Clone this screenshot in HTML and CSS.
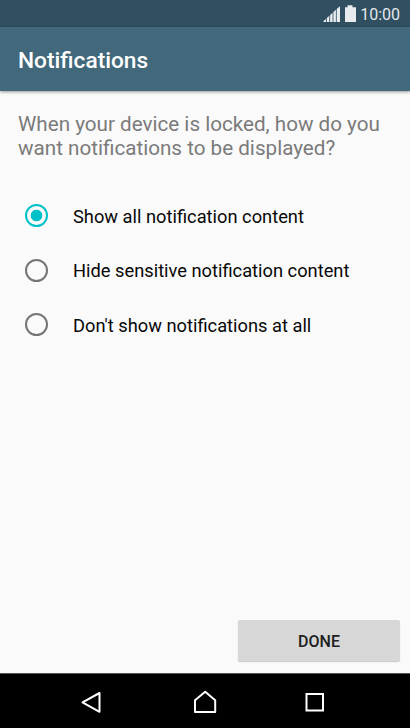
FILE: index.html
```html
<!DOCTYPE html>
<html lang="en">
<head>
<meta charset="utf-8">
<meta name="viewport" content="width=device-width, initial-scale=1">
<title>Notifications</title>
<link rel="stylesheet" href="styles.css">
</head>
<body>
<div class="screen">
  <div class="status-bar">
    <svg class="status-icons" width="34" height="18" viewBox="0 0 34 18" fill="#e8ecef">
      <path d="M.5 17v-1L3 14v3zM3.800 17v-4L6.300 10.800V17zM7.100 17v-7l2.500-2.200V17zM10.400 17V7l2.500-2.200V17zM13.700 17V4L17 1.200V17z"/>
      <path d="M22 2.200h2.500V.2h5v2H33V17H22z"/>
    </svg>
    <span class="clock">10:00</span>
  </div>
  <header class="app-bar"><h1 class="title">Notifications</h1></header>
  <main class="content">
    <p class="question">When your device is locked, how do you<br>want notifications to be displayed?</p>
    <div class="options" role="radiogroup">
      <label class="option"><input class="radio" type="radio" name="lock" checked><span class="label">Show all notification content</span></label>
      <label class="option"><input class="radio" type="radio" name="lock"><span class="label">Hide sensitive notification content</span></label>
      <label class="option"><input class="radio" type="radio" name="lock"><span class="label">Don't show notifications at all</span></label>
    </div>
    <button class="done" type="button">DONE</button>
  </main>
  <nav class="nav-bar">
    <svg width="24" height="24" viewBox="0 0 24 24" fill="none" stroke="#fff" stroke-width="2" stroke-linejoin="round"><path d="M20.500 3v18.800L3.500 12.400z"/></svg>
    <svg width="24" height="24" viewBox="0 0 24 24" fill="none" stroke="#fff" stroke-width="2" stroke-linejoin="round"><path d="M2 21.900V10.200L12.200 1.800l10 8.400v11.700z"/></svg>
    <svg width="24" height="24" viewBox="0 0 24 24" fill="none" stroke="#fff" stroke-width="2"><path d="M4.500 4h16.500v16.500H4.500z"/></svg>
  </nav>
</div>
</body>
</html>
```
FILE: styles.css
```css
* {
  box-sizing: border-box;
}

body {
  margin: 0;
  font-family: Roboto, sans-serif;
}

.screen {
  display: flex;
  flex-direction: column;
  height: 728px;
  background: #fafafa;
}

.status-bar {
  display: flex;
  flex: 0 0 27px;
  justify-content: flex-end;
  gap: 3px;
  padding: 5px 10px 0 0;
  background: #304f60;
}

.status-icons {
  display: block;
}

.clock {
  color: #e3e8eb;
  font-size: 16px;
  line-height: 19px;
}

.app-bar {
  display: flex;
  flex: 0 0 64px;
  align-items: center;
  padding: 3px 18px 0;
  background: #42687b;
  box-shadow: 0 1px 3px rgba(0, 0, 0, 0.4);
}

.title {
  margin: 0;
  color: #fff;
  font-size: 22.7px;
  font-weight: 500;
  line-height: 28px;
}

.content {
  display: flex;
  flex: 1;
  flex-direction: column;
  padding: 21px 10px 12px 18px;
}

.question {
  margin: 0;
  color: #7b7b7b;
  font-size: 20.65px;
  line-height: 24px;
  white-space: nowrap;
}

.options {
  display: flex;
  flex-direction: column;
  margin-top: 28.4px;
}

.option {
  display: flex;
  align-items: center;
  gap: 25px;
  height: 54.5px;
  padding-left: 7px;
}

.radio {
  flex: none;
  width: 23px;
  height: 23px;
  margin: 0;
  appearance: none;
  border: 2px solid #757575;
  border-radius: 50%;
}

.radio:checked {
  border-color: #00c1c9;
  background: radial-gradient(circle, #00c1c9 5.4px, transparent 6.2px);
}

.label {
  padding-top: 2px;
  color: #080808;
  font-size: 18.3px;
  line-height: 24px;
  white-space: nowrap;
}

.done {
  align-self: flex-end;
  width: 162px;
  height: 41px;
  margin-top: auto;
  padding: 2px 0 0;
  border: 0;
  border-radius: 2px;
  background: #d7d7d7;
  box-shadow: 0 1px 1px rgba(0, 0, 0, 0.2);
  color: #202020;
  font: 500 16px/20px Roboto, sans-serif;
}

.nav-bar {
  display: grid;
  flex: 0 0 55px;
  grid-template-columns: 114px 109px 24px;
  align-items: center;
  padding: 2px 0 0 79px;
  border-top: 1px solid #555;
  background: #000;
}
```
